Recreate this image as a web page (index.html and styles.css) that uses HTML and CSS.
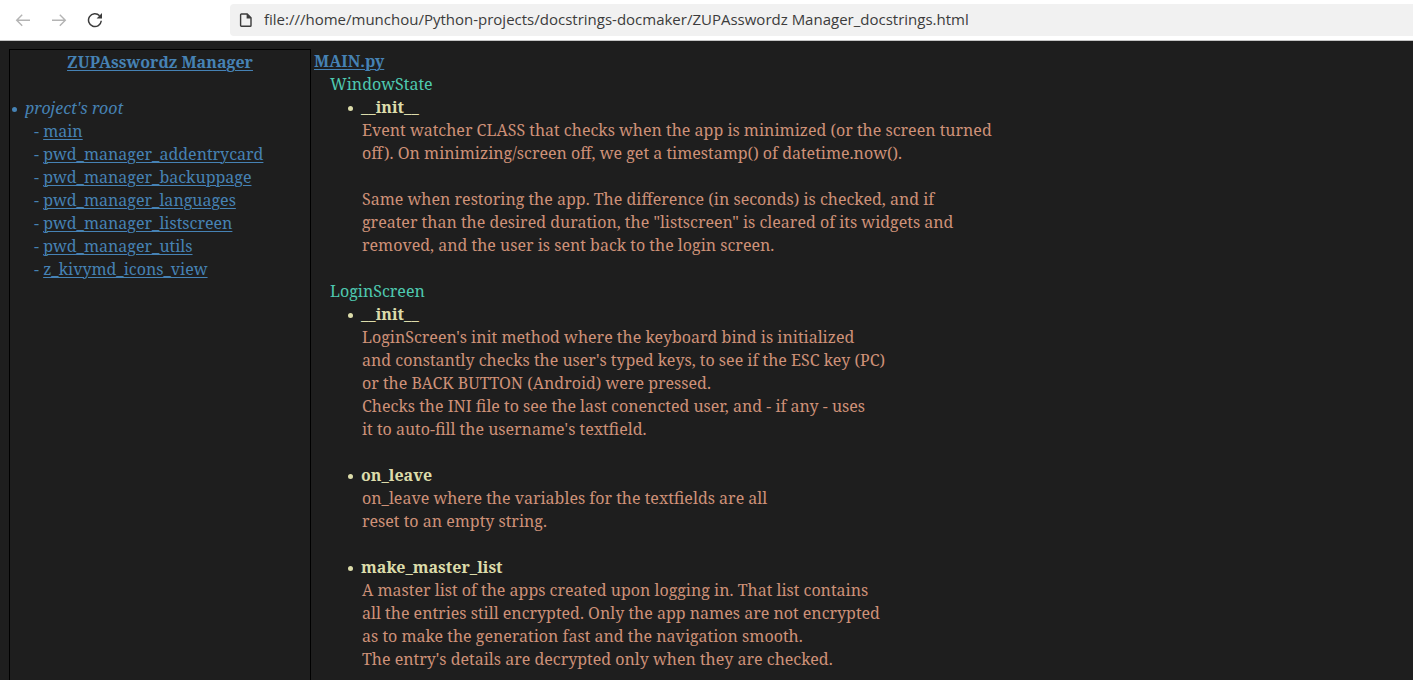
FILE: index.html
```html
<!DOCTYPE html>
<html lang="en">
<head>
<meta charset="utf-8">
<title>ZUPAsswordz Manager</title>
<link rel="stylesheet" href="styles.css">
</head>
<body>
<header class="toolbar">
  <nav class="nav-buttons" aria-label="Browser navigation">
    <button class="nav-button" type="button" aria-label="Back" disabled>
      <svg width="16" height="16" viewBox="0 0 16 16" fill="none" stroke="currentColor" stroke-width="1.4"><path d="M15 8.3H1.8M7.2 2.8L1.7 8.3l5.5 5.5"/></svg>
    </button>
    <button class="nav-button" type="button" aria-label="Forward" disabled>
      <svg width="16" height="16" viewBox="0 0 16 16" fill="none" stroke="currentColor" stroke-width="1.4"><path d="M1 8.3h13.2M8.8 2.8l5.5 5.5-5.5 5.5"/></svg>
    </button>
    <button class="nav-button nav-button-reload" type="button" aria-label="Reload">
      <svg width="16" height="16" viewBox="0 0 16 16" fill="none" stroke="currentColor" stroke-width="1.5"><path d="M14.3 8.8A6.4 6.4 0 1 1 12.6 3.8"/><path d="M15 1v5.4H9.6z" fill="currentColor" stroke="none"/></svg>
    </button>
  </nav>
  <div class="address">
    <svg class="address-icon" width="14" height="16" viewBox="0 0 14 16" fill="none" stroke="currentColor" stroke-width="1.4"><path d="M2.4 2h5.8L12 5.8v7.6a.8.8 0 0 1-.8.8H2.4a.8.8 0 0 1-.8-.8V2.8a.8.8 0 0 1 .8-.8z"/><path d="M7.6 1.8L12.2 6.4H7.6z" fill="currentColor" stroke="none"/></svg>
    <input class="address-input" type="text" aria-label="Address" value="file:///home/munchou/Python-projects/docstrings-docmaker/ZUPAsswordz Manager_docstrings.html">
  </div>
</header>
<div class="page">
  <aside class="sidebar">
    <h1 class="title"><a href="#top">ZUPAsswordz Manager</a></h1>
    <p class="root">project's root</p>
    <ul class="modules">
      <li>- <a href="#main">main</a></li>
      <li>- <a href="#addentrycard">pwd_manager_addentrycard</a></li>
      <li>- <a href="#backuppage">pwd_manager_backuppage</a></li>
      <li>- <a href="#languages">pwd_manager_languages</a></li>
      <li>- <a href="#listscreen">pwd_manager_listscreen</a></li>
      <li>- <a href="#utils">pwd_manager_utils</a></li>
      <li>- <a href="#icons">z_kivymd_icons_view</a></li>
    </ul>
  </aside>
  <main class="docs" id="main">
    <h2 class="file"><a href="#main">MAIN.py</a></h2>
    <section class="class-block">
      <h3 class="class-name">WindowState</h3>
      <article class="method">
        <h4 class="method-name">__init__</h4>
        <p class="docstring">Event watcher CLASS that checks when the app is minimized (or the screen turned
off). On minimizing/screen off, we get a timestamp() of datetime.now().

Same when restoring the app. The difference (in seconds) is checked, and if
greater than the desired duration, the "listscreen" is cleared of its widgets and
removed, and the user is sent back to the login screen.</p>
      </article>
    </section>
    <section class="class-block">
      <h3 class="class-name">LoginScreen</h3>
      <article class="method">
        <h4 class="method-name">__init__</h4>
        <p class="docstring">LoginScreen's init method where the keyboard bind is initialized
and constantly checks the user's typed keys, to see if the ESC key (PC)
or the BACK BUTTON (Android) were pressed.
Checks the INI file to see the last conencted user, and - if any - uses
it to auto-fill the username's textfield.</p>
      </article>
      <article class="method">
        <h4 class="method-name">on_leave</h4>
        <p class="docstring">on_leave where the variables for the textfields are all
reset to an empty string.</p>
      </article>
      <article class="method">
        <h4 class="method-name">make_master_list</h4>
        <p class="docstring">A master list of the apps created upon logging in. That list contains
all the entries still encrypted. Only the app names are not encrypted
as to make the generation fast and the navigation smooth.
The entry's details are decrypted only when they are checked.</p>
      </article>
    </section>
  </main>
</div>
</body>
</html>
```
FILE: styles.css
```css
* {
  box-sizing: border-box;
}

body {
  display: flex;
  flex-direction: column;
  min-height: 100vh;
  margin: 0;
  background: #1e1e1e;
  color: #4682b4;
  font-family: "Noto Serif", serif;
  font-size: 16px;
  line-height: 23px;
}

h1, h2, h3, h4, p, ul {
  margin: 0;
  padding: 0;
  font-size: 16px;
}

a {
  color: inherit;
  text-decoration-thickness: 1px;
  text-underline-offset: 2px;
}

.toolbar {
  display: flex;
  align-items: center;
  gap: 120px;
  padding: 4px 0 4px 8px;
  background: #fff;
  border-bottom: 1px solid #c4c4c4;
}

.nav-buttons {
  display: flex;
  gap: 6px;
}

.nav-button {
  display: flex;
  align-items: center;
  justify-content: center;
  width: 30px;
  height: 30px;
  padding: 0;
  border: 0;
  background: none;
  color: #b4b4b4;
}

.nav-button-reload {
  color: #3c3c3c;
}

.address {
  display: flex;
  flex: 1;
  align-items: center;
  gap: 11px;
  height: 32px;
  padding-left: 9px;
  border-radius: 4px 0 0 4px;
  background: #f1f1f1;
  color: #3c3c3c;
}

.address-input {
  flex: 1;
  padding: 0 0 2px;
  border: 0;
  outline: 0;
  background: none;
  color: inherit;
  font-family: "Open Sans", sans-serif;
  font-size: 15px;
}

.page {
  display: flex;
  flex: 1;
  gap: 3px;
  padding: 8px 8px 0 9px;
}

.sidebar {
  flex: 0 0 302px;
  padding-top: 1px;
  border: 1px solid #000;
  border-bottom: 0;
}

.title {
  margin-bottom: 23px;
  text-align: center;
}

.root {
  display: flex;
  align-items: center;
  gap: 8px;
  padding-left: 2px;
  font-style: italic;
}

.root::before,
.method-name::before {
  content: "";
  width: 5px;
  height: 5px;
  margin-top: 2px;
  border-radius: 50%;
  background: currentColor;
}

.modules {
  padding-left: 24px;
  list-style: none;
}

.docs {
  flex: 1;
  padding-top: 1px;
}

.class-block {
  padding-left: 16px;
}

.class-name {
  color: #4ec9b0;
  font-weight: 400;
}

.method {
  margin-bottom: 23px;
  padding-left: 18px;
}

.method:last-child {
  margin-bottom: 0;
}

.class-block + .class-block {
  margin-top: 23px;
}

.method-name {
  display: flex;
  align-items: center;
  gap: 8px;
  color: #dcdcaa;
}

.docstring {
  padding-left: 14px;
  color: #ce9178;
  white-space: pre-line;
}
```
